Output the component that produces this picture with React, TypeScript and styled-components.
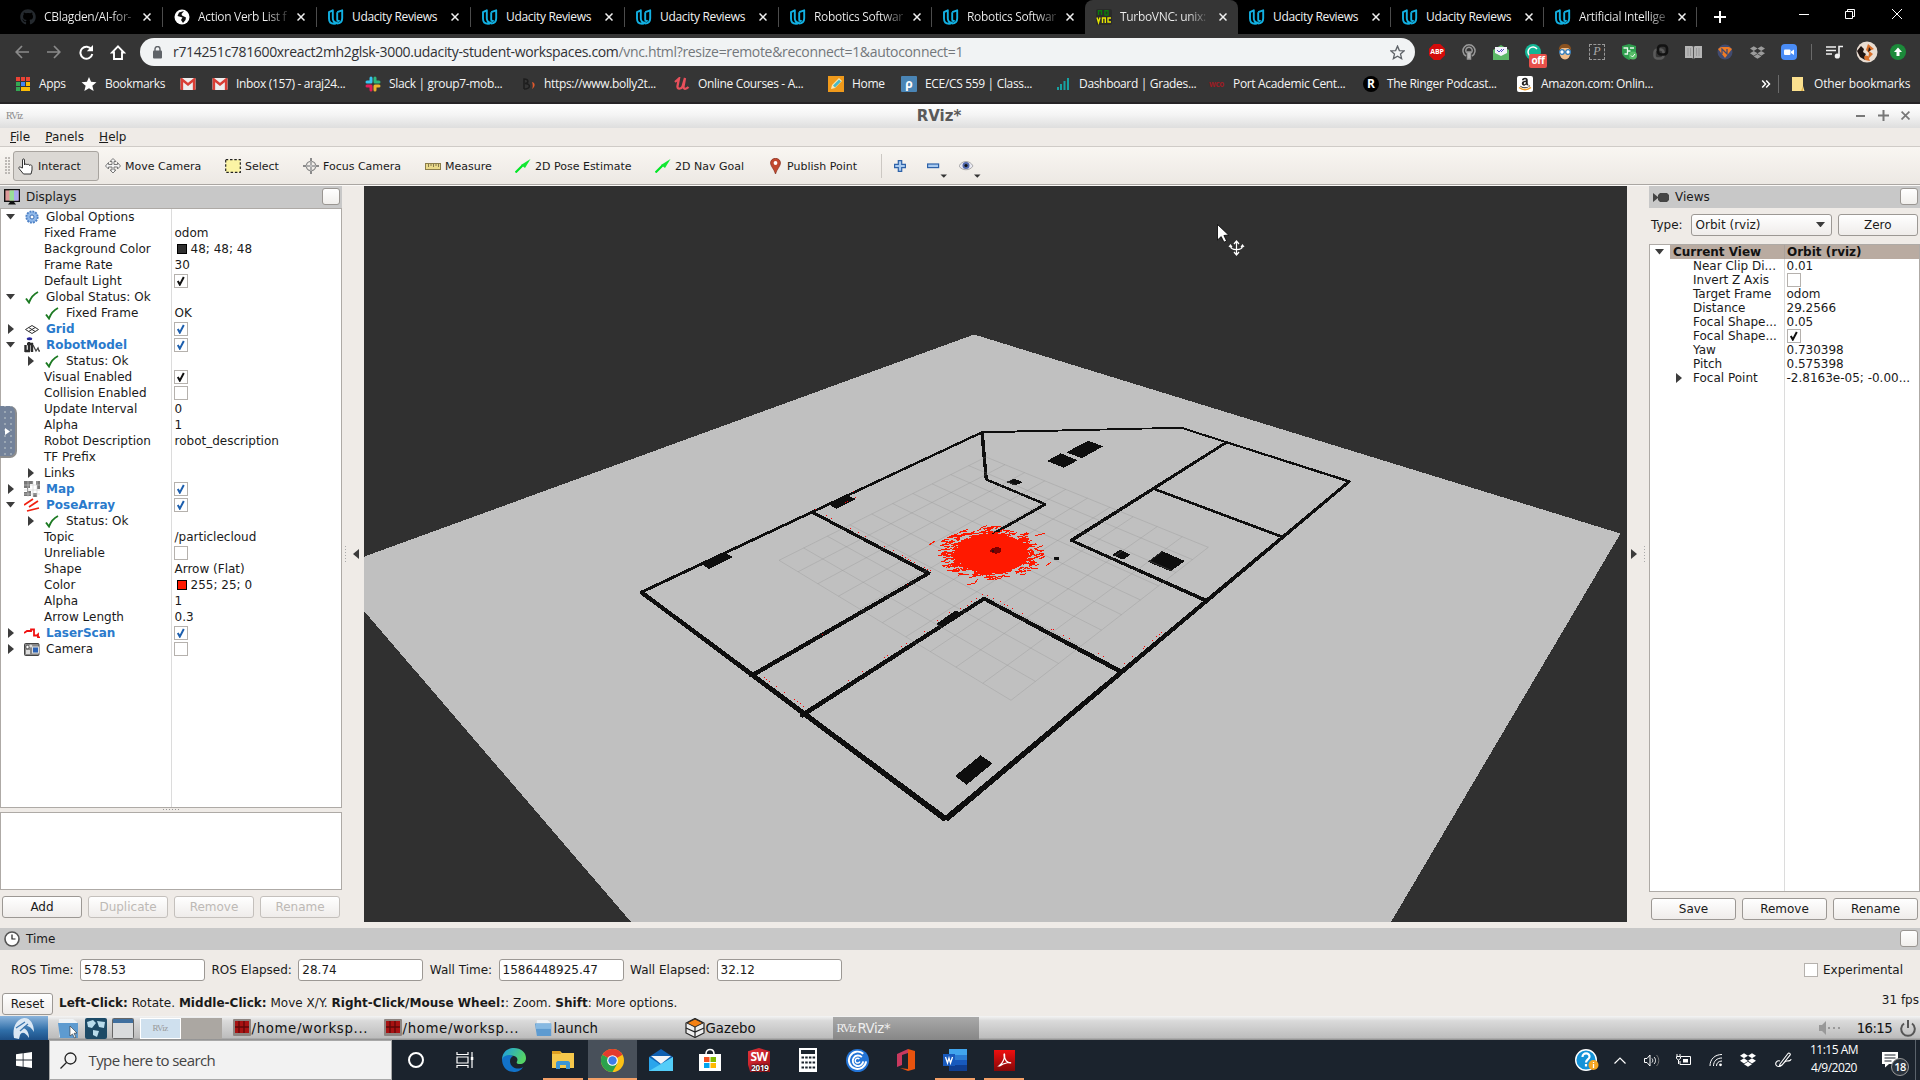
import React from "react";
import styled, { createGlobalStyle, css } from "styled-components";
import { FaDropbox, FaGithub, FaAmazon } from "react-icons/fa";

const ui = `"DejaVu Sans", "Liberation Sans", sans-serif`;
const segoe = `"Open Sans", "Noto Sans", sans-serif`;

const Global = createGlobalStyle`
  * { box-sizing: border-box; }
  html, body { margin: 0; padding: 0; background: #000; }
  body { overflow: hidden; }
  svg { display: block; flex: none; }
`;

const Screen = styled.div`
  width: 1920px;
  height: 1080px;
  display: flex;
  flex-direction: column;
  overflow: hidden;
  position: relative;
  background: #efebe7;
  font-family: ${ui};
  font-size: 12px;
  color: #1a1a1a;
  white-space: nowrap;
`;

/* ---------- browser ---------- */
const TabStrip = styled.div`
  height: 34px;
  background: #000;
  display: flex;
  padding-left: 9px;
  font-family: ${segoe};
`;
const Tab = styled.div<{ $w: number; $active?: boolean; $sep?: boolean }>`
  width: ${(p) => p.$w}px;
  height: 34px;
  flex: none;
  display: flex;
  align-items: center;
  padding: 0 0 1px 11px;
  color: #f2f2f2;
  font-size: 12px;
  letter-spacing: -0.32px;
  border-radius: 8px 8px 0 0;
  background: ${(p) => (p.$active ? "#353535" : "transparent")};
  background-image: ${(p) => (p.$sep ? "linear-gradient(#4c4c4c,#4c4c4c)" : "none")};
  background-size: 1px 20px;
  background-position: right 7px;
  background-repeat: no-repeat;
`;
const TabTitle = styled.span<{ $fade?: boolean }>`
  width: 92px;
  margin-left: 8px;
  ${(p) =>
    p.$fade &&
    css`
      color: transparent;
      background: linear-gradient(90deg, #f2f2f2 74%, #2a2a2a 98%);
      background-clip: text;
      -webkit-background-clip: text;
    `}
`;
const TabClose = styled.span`
  margin-left: 7px;
  display: flex;
`;
const NewTab = styled.div`
  width: 46px;
  display: flex;
  align-items: center;
  justify-content: center;
`;
const WinButtons = styled.div`
  margin-left: auto;
  height: 28px;
  width: 139px;
  display: flex;
  align-items: center;
  & > svg { margin: 0 auto; }
`;
const AddressRow = styled.div`
  height: 34px;
  background: #353535;
  display: flex;
  align-items: center;
  padding: 2px 6px 0 6px;
`;
const Slot = styled.div<{ $w: number }>`
  width: ${(p) => p.$w}px;
  height: 100%;
  flex: none;
  display: flex;
  align-items: center;
  justify-content: center;
  position: relative;
`;
const Omnibox = styled.div`
  width: 1275px;
  height: 28px;
  margin-left: 6px;
  border-radius: 14px;
  background: #f1f3f4;
  display: flex;
  align-items: center;
  padding: 0 10px 0 12px;
  font-family: ${segoe};
  font-size: 14px;
  letter-spacing: -0.33px;
  color: #303134;
`;
const Url = styled.span`
  margin: 0 0 1px 10px;
  flex: 1;
`;
const UrlPath = styled.span`
  color: #73777b;
`;
const OffBadge = styled.span`
  position: absolute;
  left: 12px;
  top: 18px;
  width: 18px;
  height: 14px;
  border-radius: 2px;
  background: #e8504a;
  color: #fff;
  font: bold 10px/13px ${segoe};
  letter-spacing: -0.3px;
  text-align: center;
`;
const Extensions = styled.div`
  display: flex;
  height: 100%;
  margin-left: 6px;
`;
const AbpOctagon = styled.div`
  width: 16px;
  height: 16px;
  background: #d40b0b;
  clip-path: polygon(30% 0, 70% 0, 100% 30%, 100% 70%, 70% 100%, 30% 100%, 0 70%, 0 30%);
  color: #fff;
  font: bold 7px/16px ${segoe};
  letter-spacing: -0.2px;
  text-align: center;
`;
const DashedP = styled.div`
  width: 16px;
  height: 16px;
  border: 1px dashed #999;
  color: #aaa;
  font: italic 12px/13px "Liberation Serif", serif;
  text-align: center;
`;
const BookmarkBar = styled.div`
  height: 36px;
  background: #353535;
  border-bottom: 2px solid #262426;
  display: flex;
  align-items: center;
  padding-left: 15px;
  padding-bottom: 3px;
  font-family: ${segoe};
  font-size: 12px;
  letter-spacing: -0.3px;
  color: #f4f4f4;
`;
const Bookmark = styled.div<{ $w: number; $ls?: number }>`
  width: ${(p) => p.$w}px;
  flex: none;
  display: flex;
  align-items: center;
  gap: 8px;
  letter-spacing: ${(p) => p.$ls ?? -0.33}px;
  & > svg { min-width: 16px; }
`;
const BarDivider = styled.div`
  width: 1px;
  height: 18px;
  margin: 0 11px 0 2px;
  background: #6a6a6a;
`;
const LetterTile = styled.span<{ $bg: string; $fg: string; $round?: boolean }>`
  width: 16px;
  height: 16px;
  border-radius: ${(p) => (p.$round ? 8 : 1)}px;
  background: ${(p) => p.$bg};
  color: ${(p) => p.$fg};
  font: bold 12px/15px ${segoe};
  text-align: center;
  letter-spacing: 0;
  flex: none;
`;
const TinyMark = styled.span<{ $c: string }>`
  width: 16px;
  color: ${(p) => p.$c};
  font: bold 8px/16px ${segoe};
  letter-spacing: -0.3px;
  flex: none;
`;

/* ---------- rviz window ---------- */
const WindowTitle = styled.div`
  height: 24px;
  background: linear-gradient(#fff, #f4f4f4 45%, #dedede);
  display: flex;
  align-items: center;
  padding: 0 10px 1px 6px;
  font-weight: bold;
  font-size: 15px;
  color: #5a5a5a;
`;
const TitleText = styled.span`
  flex: 1;
  text-align: center;
`;
const WindowMark = styled.span`
  width: 60px;
  font: 10px/14px "Liberation Serif", serif;
  letter-spacing: -0.8px;
  color: #8a8a8a;
`;
const WindowControls = styled.span`
  width: 54px;
  margin-left: 44px;
  display: flex;
  align-items: center;
  justify-content: space-between;
  color: #666;
`;
const MenuBar = styled.div`
  height: 19px;
  border-bottom: 1px solid #cfcbc7;
  display: flex;
  gap: 15.2px;
  padding: 1px 0 0 10px;
  line-height: 16px;
`;
const ToolBar = styled.div`
  height: 39px;
  background: linear-gradient(#f9f6f2, #ece8e3);
  border-bottom: 1px solid #fbf9f7;
  box-shadow: inset 0 -1px 0 #aaa6a2;
  display: flex;
  align-items: center;
  padding: 0 0 0 5px;
  font-size: 11px;
`;
const Handle = styled.div`
  width: 5px;
  height: 18px;
  margin-right: 3px;
  background: radial-gradient(circle at 1px 1px, #bdb9b5 0.8px, transparent 1px) 0 0 / 3px 3px;
`;
const Tool = styled.div<{ $w: number; $pressed?: boolean }>`
  width: ${(p) => p.$w}px;
  height: 30px;
  flex: none;
  display: flex;
  align-items: center;
  gap: 4px;
  ${(p) =>
    p.$pressed &&
    css`
      width: 86px;
      margin-right: 6px;
      padding-left: 4px;
      border: 1px solid #a8a49f;
      border-radius: 3px;
      background: #dbd8d4;
    `}
`;
const ToolText = styled.span`
  padding-top: 1px;
`;
const ToolDivider = styled.div`
  width: 1px;
  height: 24px;
  background: #ccc8c3;
  margin-right: 12px;
`;
const Body = styled.div`
  height: 742px;
  display: flex;
`;
const LeftDock = styled.div`
  width: 342px;
  display: flex;
  flex-direction: column;
`;
const RightDock = styled.div`
  width: 271px;
  display: flex;
  flex-direction: column;
`;
const Splitter = styled.div<{ $right?: boolean }>`
  width: 22px;
  height: 736px;
  display: flex;
  align-items: center;
  justify-content: flex-end;
  padding-right: ${(p) => (p.$right ? 4 : 5)}px;
  gap: 7px;
`;
const SplitDots = styled.div`
  width: 1px;
  height: 17px;
  background: repeating-linear-gradient(#aaa 0 1px, transparent 1px 3px);
`;
const HDots = styled.div`
  width: 17px;
  height: 1px;
  margin: 1px auto 2px;
  background: repeating-linear-gradient(90deg, #999 0 1px, transparent 1px 3px);
`;
const DockHeader = styled.div`
  height: 22px;
  flex: none;
  background: #c8c8c8;
  display: flex;
  align-items: center;
  padding: 0 2px 0 4px;
  gap: 6px;
`;
const DockClose = styled.span`
  margin-left: auto;
  width: 18px;
  height: 17px;
  margin-bottom: 1px;
  border: 1px solid #9a9692;
  border-radius: 3px;
  background: linear-gradient(#fff, #f1efec);
`;
const Tree = styled.div<{ $h: number; $split: number }>`
  height: ${(p) => p.$h}px;
  border: 1px solid #aeaaa6;
  background: linear-gradient(#dcdcdc, #dcdcdc) ${(p) => p.$split}px 0 / 1px 100% no-repeat #fff;
`;
const Row = styled.div<{ $h: number; $split: number }>`
  height: ${(p) => p.$h}px;
  display: grid;
  grid-template-columns: ${(p) => p.$split}px 1fr;
  line-height: ${(p) => p.$h}px;
`;
const NameCell = styled.div<{ $pad: number; $link?: boolean; $sel?: boolean }>`
  padding-left: ${(p) => p.$pad}px;
  display: flex;
  align-items: center;
  ${(p) => p.$link && css`color: #2a7acc; font-weight: bold;`}
  ${(p) => p.$sel && css`background: linear-gradient(90deg, #fff 20px, #b9aba1 20px); font-weight: bold; color: #111;`}
`;
const Twisty = styled.span`
  width: 10px;
  display: flex;
  justify-content: center;
  flex: none;
`;
const IconBox = styled.span<{ $ml: number; $w: number; $mr: number }>`
  margin-left: ${(p) => p.$ml}px;
  width: ${(p) => p.$w}px;
  margin-right: ${(p) => p.$mr}px;
  height: 16px;
  flex: none;
  display: flex;
  align-items: center;
  justify-content: center;
`;
const NameText = styled.span<{ $ml?: number }>`
  margin-left: ${(p) => p.$ml ?? 0}px;
`;
const ValueCell = styled.div<{ $sel?: boolean; $pad?: number }>`
  display: flex;
  align-items: center;
  padding-left: ${(p) => p.$pad ?? 2.5}px;
  ${(p) => p.$sel && css`background: #b9aba1; font-weight: bold; color: #111; border-left: 1px solid #aaa19a; padding-left: 2px;`}
`;
const Check = styled.span`
  width: 14px;
  height: 14px;
  border: 1px solid #b5b1ad;
  background: #fff;
  display: flex;
  align-items: center;
  justify-content: center;
  flex: none;
`;
const Swatch = styled.span<{ $c: string }>`
  width: 10px;
  height: 10px;
  margin: 0 4px 0 3px;
  border: 1px solid #000;
  background: ${(p) => p.$c};
`;
const HelpBox = styled.div`
  height: 78px;
  border: 1px solid #aeaaa6;
  background: #fff;
`;
const Buttons = styled.div`
  display: flex;
  gap: 6px;
  padding: 6px 2px 0;
`;
const Button = styled.div<{ $disabled?: boolean; $w?: number }>`
  ${(p) => (p.$w ? `width: ${p.$w}px; flex: none;` : "flex: 1;")}
  height: 22px;
  border: 1px solid ${(p) => (p.$disabled ? "#c4c0bc" : "#9c9894")};
  border-radius: 3px;
  background: linear-gradient(#fff, #efecea);
  color: ${(p) => (p.$disabled ? "#bdb9b5" : "#1a1a1a")};
  text-align: center;
  line-height: 20px;
`;
const TypeRow = styled.div`
  height: 36px;
  display: flex;
  align-items: center;
  padding: 0 2px 3px 2px;
`;
const Combo = styled.div`
  width: 141px;
  height: 22px;
  margin: 0 6px 0 8px;
  padding: 0 6px 0 4px;
  border: 1px solid #9c9894;
  border-radius: 3px;
  background: linear-gradient(#fff, #efecea);
  display: flex;
  align-items: center;
  justify-content: space-between;
`;
const TimeRow = styled.div`
  height: 39px;
  display: flex;
  align-items: center;
  padding: 0 17px 0 11px;
`;
const Field = styled.span`
  width: 125px;
  height: 22px;
  margin: 0 6.5px 0 6.4px;
  padding-left: 3px;
  border: 1px solid #9c9894;
  border-radius: 3px;
  background: #fff;
  line-height: 20px;
`;
const Experimental = styled.span`
  margin-left: auto;
  display: flex;
  align-items: center;
  gap: 5px;
`;
const StatusRow = styled.div`
  height: 27px;
  display: flex;
  align-items: center;
  padding: 2px 1px 0 2px;
`;
const Hint = styled.span`
  margin-left: 6px;
  margin-bottom: 2px;
  flex: 1;
  letter-spacing: 0.025px;
`;
const Fps = styled.span`
  margin-bottom: 7px;
`;

/* ---------- lxde panel ---------- */
const Panel = styled.div`
  height: 24px;
  background: linear-gradient(#f4f4f4, #dadada 20%, #bdbdbd 90%, #8a8a8a);
  display: flex;
  align-items: center;
  font-size: 13.3px;
  color: #111;
`;
const LxLogo = styled.div`
  width: 48px;
  height: 24px;
  background: linear-gradient(#8bb4dc, #2f6ea8 60%, #1d4f86);
  display: flex;
  justify-content: center;
  margin-right: 9px;
`;
const Launch = styled.div`
  width: 27.5px;
`;
const Desk = styled.div<{ $on?: boolean }>`
  width: 41px;
  height: 21px;
  background: ${(p) => (p.$on ? "#cfe0ee" : "#aba7a2")};
  border: ${(p) => (p.$on ? "1px solid #fff" : "0")};
  font: 9px/18px "Liberation Serif", serif;
  letter-spacing: -0.7px;
  color: #999;
  text-align: center;
`;
const Task = styled.div<{ $w: number; $active?: boolean; $ls?: number }>`
  width: ${(p) => p.$w}px;
  height: 23px;
  display: flex;
  align-items: center;
  gap: 1px;
  padding-left: 11px;
  letter-spacing: ${(p) => p.$ls ?? 0}px;
  ${(p) => p.$active && css`background: linear-gradient(#a9a9a9, #868686); color: #eee; padding-left: 4px;`}
`;
const TaskMark = styled.span`
  font: 12px/20px "Liberation Serif", serif;
  letter-spacing: -1.2px;
  width: 20px;
`;
const PanelRight = styled.div`
  margin-left: auto;
  display: flex;
  align-items: center;
  padding-right: 4px;
  gap: 8px;
`;
const PanelClock = styled.span`
  margin-left: 8px;
  letter-spacing: -0.6px;
`;

/* ---------- windows taskbar ---------- */
const Taskbar = styled.div`
  height: 40px;
  background: #1b232d;
  display: flex;
  font-family: ${segoe};
`;
const SearchBox = styled.div`
  width: 343px;
  height: 40px;
  background: #f2f2f2;
  border: 1px solid #a8a8a8;
  display: flex;
  align-items: center;
  padding-left: 10px;
  gap: 12px;
  font-size: 15px;
  letter-spacing: -0.6px;
  color: #444;
`;
const AppSlot = styled.div<{ $run?: boolean; $on?: boolean }>`
  width: 49px;
  height: 40px;
  display: flex;
  align-items: center;
  justify-content: center;
  ${(p) => p.$on && css`background: #48505a;`}
  ${(p) => p.$run && css`
    background-image: linear-gradient(#f4a067, #f4a067);
    background-size: ${p.$on ? "49px" : "40px"} 2px;
    background-position: center bottom;
    background-repeat: no-repeat;
  `}
`;
const SwTile = styled.div`
  width: 22px;
  height: 24px;
  clip-path: polygon(50% 0, 100% 14%, 100% 100%, 10% 100%, 0 70%, 0 14%);
  background: linear-gradient(135deg, #e8333a, #9b0f18);
  color: #fff;
  font: bold 12px/15px ${segoe};
  letter-spacing: -0.5px;
  text-align: center;
  padding-top: 1px;
`;
const SwYear = styled.div`
  font: bold 8px/7px ${segoe};
  letter-spacing: -0.2px;
  padding-left: 2px;
  text-shadow: 0 0 2px #000, 0 0 2px #000;
`;
const Tray = styled.div`
  margin-left: auto;
  width: 350px;
  display: flex;
`;
const Clock = styled.div`
  width: 68px;
  margin-left: -2px;
  margin-right: 2px;
  text-align: center;
  font-size: 12px;
  line-height: 18px;
  letter-spacing: -0.5px;
  color: #fff;
  padding-top: 1px;
`;
const Count = styled.span`
  position: absolute;
  left: 21px;
  top: 18px;
  width: 18px;
  height: 18px;
  border-radius: 9px;
  border: 1px solid #999;
  background: #2b333d;
  color: #fff;
  font: 600 11px/16px ${segoe};
  letter-spacing: -0.5px;
  text-align: center;
`;
const ShowDesktop = styled.div`
  width: 5px;
  margin-left: auto;
  border-left: 1px solid #5a626b;
`;

const VncHandle = styled.div`
  position: absolute;
  left: 0;
  top: 406px;
  width: 17px;
  height: 52px;
  border-radius: 0 7px 7px 0;
  background: radial-gradient(circle, #9aa6b3 0.8px, transparent 1px) 2px 3px / 6px 6px #73829a;
  border-right: 2px solid #8d8d8d;
  border-bottom: 2px solid #8d8d8d;
  display: flex;
  align-items: center;
  justify-content: center;
`;
const Pointer = styled.div`
  position: absolute;
  left: 1216px;
  top: 223px;
`;

/* ---------- icons ---------- */
const Udacity = () => (
  <svg width="16" height="16" viewBox="0 0 16 16" fill="none" stroke="#12b0e2" strokeWidth="1.9" strokeLinejoin="round">
    <path d="M4.8 1.3L1 3.2v6.3C1 13 3 14.8 6 14.8c1.3 0 2.2-.3 3-1C6.5 13.6 4.8 12 4.8 9.3z" />
    <path d="M9.200 3.200l5-1.900v8c0 3.200-2.200 5.200-5.200 5.300" /><path d="M9.200 3.200v7.600c0 1.500 1.600 1.500 2.400.4" />
  </svg>
);
const X = ({ c = "#f0f0f0", s = 8 }: { c?: string; s?: number }) => (
  <svg width={s} height={s} viewBox="0 0 8 8" stroke={c} strokeWidth="1.5"><path d="M.5.5l7 7M7.5.5l-7 7" /></svg>
);
const Gmail = () => (
  <svg width="15" height="12" viewBox="0 0 15 12"><rect width="15" height="12" rx="1" fill="#eee" /><path d="M1.4 12V1.5l6.1 5 6.1-5V12" fill="none" stroke="#d93e35" strokeWidth="2.5" /></svg>
);
const Slack = () => (
  <svg width="16" height="16" viewBox="0 0 16 16" strokeWidth="3" strokeLinecap="round"><path d="M6 2v4M2 6h4" stroke="#36c5f0" /><path d="M10 2v4M14 6h-4" stroke="#2eb67d" /><path d="M10 14v-4M14 10h-4" stroke="#ecb22e" /><path d="M6 14v-4M2 10h4" stroke="#e01e5a" /></svg>
);
const Globe = () => (
  <svg width="16" height="16" viewBox="0 0 16 16"><circle cx="8" cy="8" r="7.5" fill="#fff" /><path d="M10 2L5 3.5 3.5 7l5 1.5L7 11l2 3 2.5-3L12 8.500 8 6.500 7.500 5z" fill="#111" /></svg>
);
const Tick = ({ c }: { c: string }) => (
  <svg width="10" height="10" viewBox="0 0 10 10"><path d="M1.8 5l2 3.600L7.800 1" fill="none" stroke={c} strokeWidth="2" /></svg>
);
const GreenTick = () => (
  <svg width="14" height="13" viewBox="0 0 14 13"><path d="M1 7.500l3 4C5.500 7.500 9 3 13 1" fill="none" stroke="#1c7a22" strokeWidth="1.900" /></svg>
);
const Down = ({ w = 9 }: { w?: number }) => (
  <svg width={w} height={w * 0.6} viewBox="0 0 10 6"><path d="M0 0h10L5 6z" fill="#3c3c3c" /></svg>
);
const Right = ({ flip }: { flip?: boolean }) => (
  <svg width="6" height="10" viewBox="0 0 6 10"><path d={flip ? "M6 0v10L0 5z" : "M0 0v10l6-5z"} fill="#3c3c3c" /></svg>
);
const Arrow2D = () => (
  <svg width="16" height="14" viewBox="0 0 16 14"><path d="M.5 13.500L8 6" stroke="#00e626" strokeWidth="2.200" /><path d="M6 6l9.500-6-5.500 9z" fill="#12e832" /></svg>
);

const icons: Record<string, React.ReactNode> = {
  gear: <svg width="14" height="14" viewBox="0 0 14 14"><circle cx="7" cy="7" r="5.600" fill="#86b0e4" stroke="#4d80c5" strokeWidth="2" strokeDasharray="1.900 1" /><circle cx="7" cy="7" r="4.600" fill="#8fb8ea" /><circle cx="7" cy="7" r="2" fill="#fff" stroke="#3d6fb5" /></svg>,
  tick: <GreenTick />,
  grid: <svg width="14" height="9" viewBox="0 0 14 9" fill="none" stroke="#333" strokeWidth="1"><path d="M.5 4.500L7 .5l6.500 4L7 8.500zM3.700 2.500l6.500 4M10.200 2.500l-6.500 4" /></svg>,
  robot: <svg width="16" height="16" viewBox="0 0 16 16"><ellipse cx="5.500" cy="1.800" rx="2.800" ry="1.500" fill="#25259a" /><path d="M1.500 8v7M5 5v9M8 6v9M3 7h6M1 14h5" stroke="#2b2b2b" strokeWidth="2.400" fill="none" /><path d="M9 8l3 6 2-3 1 3h1" stroke="#444" strokeWidth="1.300" fill="none" /></svg>,
  map: <svg width="16" height="16" viewBox="0 0 16 16"><path d="M0 0h9v3H6v4H4v3h3v5H0v-4h3V7H0zM12 0h4v8h-3V4h-1zM9 12h4v4H9z" fill="#777" /><path d="M4 0v16M9 0v16M13 0v16M0 4h16M0 9h16M0 13h16" stroke="#ccc" strokeWidth=".6" /></svg>,
  pose: <svg width="16" height="14" viewBox="0 0 16 14" stroke="#f02010" strokeWidth="1.700"><path d="M0 7l9-6M5 9l9-6M3 13l12-3" /></svg>,
  laser: <svg width="16" height="10" viewBox="0 0 16 10"><path d="M0 5l3-2h4V1.500h3v6h3l1-1v3h2" fill="none" stroke="#f01010" strokeWidth="1.800" /></svg>,
  camera: <svg width="16" height="14" viewBox="0 0 16 14"><rect x=".5" y="1.500" width="14.500" height="12" rx="1" fill="#888" stroke="#444" /><circle cx="3.500" cy="5" r="1.700" fill="#fff" stroke="#222" strokeWidth=".6" /><circle cx="6.800" cy="4" r="1.500" fill="#ddd" /><rect x="8.500" y="5" width="6" height="6" fill="#2b62b5" stroke="#ddd" /><rect x="2" y="8" width="4" height="4" fill="#ddd" /></svg>,
};

function VncIcon() {
  return (
    <svg width="16" height="16" viewBox="0 0 16 16"><rect width="16" height="16" rx="2" fill="#2a2a2a" /><g fill="none" strokeWidth="1.400"><path d="M2.500 6V1.700h3V6M9 1.700h3V6H9z" stroke="#0c7a0c" /><path d="M1 8.500l1.500 5 1.500-5M6.500 14V9h2.800v5M15 9h-3v4h3" stroke="#e6e600" /></g></svg>
  );
}

/* ---------- data ---------- */
const tabs: { icon: React.ReactNode; t: string; fade?: boolean; nosep?: boolean; active?: boolean }[] = [
  { icon: <FaGithub size={16} color="#24292e" />, t: "CBlagden/AI-for-", fade: true },
  { icon: <Globe />, t: "Action Verb List f", fade: true },
  { icon: <Udacity />, t: "Udacity Reviews" },
  { icon: <Udacity />, t: "Udacity Reviews" },
  { icon: <Udacity />, t: "Udacity Reviews" },
  { icon: <Udacity />, t: "Robotics Softwar", fade: true },
  { icon: <Udacity />, t: "Robotics Softwar", fade: true, nosep: true },
  { icon: <VncIcon />, t: "TurboVNC: unix:", fade: true, active: true, nosep: true },
  { icon: <Udacity />, t: "Udacity Reviews" },
  { icon: <Udacity />, t: "Udacity Reviews" },
  { icon: <Udacity />, t: "Artificial Intellige", fade: true },
];

type Item = { n: string; d?: number; open?: boolean | null; icon?: string; v?: string; c?: boolean; link?: boolean; sw?: string };
const items: Item[] = [
  { n: "Global Options", open: true, icon: "gear" },
  { n: "Fixed Frame", d: 1, v: "odom" },
  { n: "Background Color", d: 1, v: "48; 48; 48", sw: "#303030" },
  { n: "Frame Rate", d: 1, v: "30" },
  { n: "Default Light", d: 1, c: true },
  { n: "Global Status: Ok", open: true, icon: "tick" },
  { n: "Fixed Frame", d: 1, icon: "tick", v: "OK" },
  { n: "Grid", open: false, icon: "grid", c: true, link: true },
  { n: "RobotModel", open: true, icon: "robot", c: true, link: true },
  { n: "Status: Ok", d: 1, open: false, icon: "tick" },
  { n: "Visual Enabled", d: 1, c: true },
  { n: "Collision Enabled", d: 1, c: false },
  { n: "Update Interval", d: 1, v: "0" },
  { n: "Alpha", d: 1, v: "1" },
  { n: "Robot Description", d: 1, v: "robot_description" },
  { n: "TF Prefix", d: 1 },
  { n: "Links", d: 1, open: false },
  { n: "Map", open: false, icon: "map", c: true, link: true },
  { n: "PoseArray", open: true, icon: "pose", c: true, link: true },
  { n: "Status: Ok", d: 1, open: false, icon: "tick" },
  { n: "Topic", d: 1, v: "/particlecloud" },
  { n: "Unreliable", d: 1, c: false },
  { n: "Shape", d: 1, v: "Arrow (Flat)" },
  { n: "Color", d: 1, v: "255; 25; 0", sw: "#ff1900" },
  { n: "Alpha", d: 1, v: "1" },
  { n: "Arrow Length", d: 1, v: "0.3" },
  { n: "LaserScan", open: false, icon: "laser", c: true, link: true },
  { n: "Camera", open: false, icon: "camera", c: false },
];
const views: Item[] = [
  { n: "Near Clip Di...", v: "0.01" },
  { n: "Invert Z Axis", c: false },
  { n: "Target Frame", v: "odom" },
  { n: "Distance", v: "29.2566" },
  { n: "Focal Shape...", v: "0.05" },
  { n: "Focal Shape...", c: true },
  { n: "Yaw", v: "0.730398" },
  { n: "Pitch", v: "0.575398" },
  { n: "Focal Point", v: "-2.8163e-05; -0.00...", open: false },
];

function DisplayRow({ it }: { it: Item }) {
  const d = it.d ?? 0;
  return (
    <Row $h={16} $split={171}>
      <NameCell $pad={4.5 + d * 20} $link={it.link}>
        <Twisty>{it.open === true ? <Down /> : it.open === false ? <Right /> : null}</Twisty>
        {it.icon ? <IconBox $ml={d ? 8.5 : 8.5} $w={16} $mr={d ? 6 : 6}>{icons[it.icon]}</IconBox> : null}
        <NameText $ml={it.icon ? 0 : 8.5}>{it.n}</NameText>
      </NameCell>
      <ValueCell $pad={it.v && !it.sw ? 2.5 : 1.5}>
        {it.c !== undefined && <Check>{it.c && <Tick c={it.link ? "#1d5fae" : "#111"} />}</Check>}
        {it.sw && <Swatch $c={it.sw} />}
        {it.v}
      </ValueCell>
    </Row>
  );
}

/* ---------- 3D scene ---------- */
type P = [number, number];
const gridQuad: P[] = [[779, 560.3], [1011, 700.3], [1208.3, 547.3], [986, 457]];
function project(u: number, v: number): P {
  const [[x0, y0], [x1, y1], [x2, y2], [x3, y3]] = gridQuad;
  const ax = x1 - x2, bx = x3 - x2, sx = x0 - x1 + x2 - x3;
  const ay = y1 - y2, by = y3 - y2, sy = y0 - y1 + y2 - y3;
  const det = ax * by - bx * ay;
  const g = (sx * by - bx * sy) / det;
  const h = (ax * sy - sx * ay) / det;
  const w = g * u + h * v + 1;
  return [((x1 - x0 + g * x1) * u + (x3 - x0 + h * x3) * v + x0) / w, ((y1 - y0 + g * y1) * u + (y3 - y0 + h * y3) * v + y0) / w];
}
const gridPath = Array.from({ length: 11 }, (_, i) => {
  const t = i / 10;
  return `M${project(t, 0)}L${project(t, 1)}M${project(0, t)}L${project(1, t)}`;
}).join("");

const walls: [number, number, number, number, number, number][] = [
  [982, 432.3, 2, 1182, 427.7, 1.7],
  [1181, 427.7, 1.9, 1350, 481.7, 2.5],
  [1350, 480.8, 3, 946, 819, 6],
  [946, 819.500, 6, 641, 592, 4.200],
  [640.5, 592.6, 3, 982, 432.3, 2.3],
  [982, 432, 3.6, 986.3, 480, 3.2],
  [985, 479, 2.4, 1046, 504.5, 2.5],
  [1046, 503.8, 2.8, 992, 534.5, 2.8],
  [1227, 442, 2.7, 1070.5, 541, 3.6],
  [1153, 488.5, 2.5, 1283, 537.2, 2.7],
  [1070.5, 540, 2.9, 1207, 601, 3.6],
  [811.5, 511.8, 3, 930, 574, 3.9],
  [929.5, 572.7, 3.7, 751, 676, 4.4],
  [985, 598, 3.8, 801, 716, 4.8],
  [983, 598, 3.7, 1123, 672.8, 4.7],
];
const wallPoly = ([x1, y1, a, x2, y2, b]: number[]) => {
  const l = Math.hypot(x2 - x1, y2 - y1);
  const nx = -(y2 - y1) / l / 2, ny = (x2 - x1) / l / 2;
  return `${x1 + nx * a},${y1 + ny * a} ${x2 + nx * b},${y2 + ny * b} ${x2 - nx * b},${y2 - ny * b} ${x1 - nx * a},${y1 - ny * a}`;
};
const boxes = [
  "828.3,504.3 847.7,495.3 855.7,499 836.7,508.7",
  "701.7,564.3 725,552.7 733,557 709.3,569",
  "936,624 955,611 964,612.3 940,626.7",
  "955,776 980.7,755.3 992.7,763.3 966.7,784.7",
  "1047,461 1060.7,453.3 1077.7,460.3 1063.7,467.7",
  "1066.3,452.3 1088.3,440.7 1103,446.3 1081.7,458.3",
  "1006.3,482 1014,478.7 1022.7,482 1015,485.7",
  "1112,555 1120,549.7 1130.7,554.7 1123,559.7",
  "1147.7,561.7 1162,551 1184.7,561 1170.7,571.3",
];
const particles = (() => {
  let seed = 77;
  const rnd = () => ((seed = (seed * 16807) % 2147483647) / 2147483647);
  let d = "";
  for (let i = 0; i < 760; i++) {
    const a = rnd() * Math.PI * 2;
    const r = 0.74 + Math.pow(rnd(), 2.6) * 0.5;
    const x = 990.5 + Math.cos(a) * r * 43;
    const y = 554 + Math.sin(a) * r * 21;
    const b = -0.6 + rnd() * 0.65;
    const l = 3 + rnd() * 5;
    d += `M${(x - l / 2).toFixed(1)} ${y.toFixed(1)}l${(Math.cos(b) * l).toFixed(1)} ${(Math.sin(b) * l * 0.8).toFixed(1)}`;
  }
  return d;
})();
const hits: P[] = [
  [826, 515], [831, 518], [850, 528], [858, 532], [865, 536], [884, 546], [893, 550], [902, 555], [905, 557], [908, 559], [910, 560], [914, 562], [924, 567], [927, 569], [930, 570],
  [845, 502], [847, 501], [855, 497], [853, 491], [815, 509], [907, 584], [822, 634], [764, 677], [766, 679], [769, 681], [776, 686], [784, 692], [794, 699], [797, 701], [800, 703], [803, 706],
  [848, 680], [862, 671], [884, 657], [887, 655], [901, 646], [906, 643], [924, 631], [937, 620], [949, 612], [960, 608], [967, 605], [971, 601], [976, 598], [982, 594], [987, 595], [993, 598],
  [1000, 601], [1004, 604], [1007, 605], [1012, 608], [1022, 613], [1051, 629], [1053, 629], [1063, 635], [1069, 638], [1098, 653], [1103, 656], [1124, 663], [1132, 656], [1143, 648], [1144, 646], [1152, 640], [1156, 636], [1159, 634], [1161, 632],
];
function Scene() {
  return (
    <svg width="1263" height="736" viewBox="364 186 1263 736" shapeRendering="crispEdges">
      <rect x="364" y="186" width="1263" height="736" fill="#303030" />
      <polygon points="364,556.7 974,334.5 1620.5,533.5 1391,922 631,922 364,611" fill="#c0c0c0" />
      <g fill="#0e0e0e">
        {walls.map((w, i) => <polygon key={i} points={wallPoly(w)} />)}
        {boxes.map((b) => <polygon key={b} points={b} />)}
        <rect x="749" y="673" width="7" height="4" />
        <rect x="800" y="713" width="6" height="4" />
        <rect x="1053.5" y="557" width="5" height="3" />
      </g>
      <path d={gridPath} stroke="#909090" strokeOpacity=".3" fill="none" shapeRendering="auto" />
      <ellipse cx="992" cy="553.5" rx="36" ry="19.5" fill="#ff1900" />
      <path d={particles} stroke="#ff1900" strokeWidth="1" fill="none" />
      <path d="M935 541l-6 4M1035 536l10-3M1046 566l5-4M967 585l8-2 3-4M991 527l10-1M948 541l-5 1M948 549l-6 1" stroke="#ff1900" fill="none" />
      <path d="M992 534l14-7" stroke="#0e0e0e" strokeDasharray="3 1" />
      <path d="M991 549l5-2 5 1v4l-5 2-6-2z" fill="#7c0000" />
      <rect x="992" y="550" width="2" height="2" fill="#301010" />
      {hits.map(([x, y], i) => <rect key={i} x={x} y={y} width="1" height="1" fill="#f00" />)}
    </svg>
  );
}

const barIcons: [number, React.ReactNode][] = [
  [32, <AbpOctagon>ABP</AbpOctagon>],
  [32, <svg width="14" height="16" viewBox="0 0 14 16" fill="none" stroke="#999" strokeWidth="1.500"><path d="M4 12a6 6 0 1 1 6 0" /><path d="M5 9a3.200 3.200 0 1 1 4 0" /><path d="M5.500 15V8h3v7z" fill="#bbb" /></svg>],
  [32, <svg width="16" height="15" viewBox="0 0 16 15"><path d="M0 5l8-5 8 5v10H0z" fill="#5cb867" /><path d="M2 2h12v6l-6 3-6-3z" fill="#f3f3fb" /><path d="M4 5l2 2 3-3M8 7l3-3" stroke="#5a4bc0" fill="none" /></svg>],
  [32, <><svg width="16" height="16" viewBox="0 0 16 16"><circle cx="8" cy="8" r="8" fill="#13b795" /><path d="M12 5a5 5 0 1 0 0 6" fill="none" stroke="#fff" strokeWidth="1.500" /></svg><OffBadge>off</OffBadge></>],
  [32, <svg width="14" height="16" viewBox="0 0 14 16"><ellipse cx="7" cy="8.500" rx="5.500" ry="7" fill="#efbd8b" /><path d="M.8 6C1 1 4 0 7 0s6 1 6.200 6L10 4H4z" fill="#8a5220" /><circle cx="4" cy="8" r="2.300" fill="#fff" stroke="#2b7bbd" strokeWidth="1.300" /><circle cx="10" cy="8" r="2.300" fill="#fff" stroke="#2b7bbd" strokeWidth="1.300" /></svg>],
  [32, <DashedP>P</DashedP>],
  [32, <svg width="16" height="16" viewBox="0 0 16 16"><path d="M1 2l7-2 7 2v6c0 4-3 6-7 8-4-2-7-4-7-8z" fill="#2e9e4d" /><path d="M2.500 4h4v6h-3M9 4h4M6.500 7h3" stroke="#e9f7ec" fill="none" strokeWidth="1.300" /><circle cx="12" cy="11.500" r="4" fill="#58bd68" /><path d="M10 11.500l1.500 1.500 2.500-3" stroke="#fff" fill="none" /></svg>],
  [32, <svg width="16" height="16" viewBox="0 0 16 16" fill="none" strokeWidth="2.600"><rect x="1.500" y="5.500" width="9" height="9" rx="3" stroke="#5a5a5a" /><rect x="5" y="1.500" width="9" height="9" rx="3" stroke="#121212" /></svg>],
  [32, <svg width="17" height="14" viewBox="0 0 17 14"><path d="M0 1h7l1.500 1L10 1h7v12h-7l-1.500 1L7 13H0z" fill="#b5b5b5" /><path d="M8.500 1v13" stroke="#555" /><path d="M3 3v8M5.500 3v8M11.500 3v8M14 3v8" stroke="#999" /></svg>],
  [32, <svg width="16" height="16" viewBox="0 0 16 16"><circle cx="8" cy="8" r="7.500" fill="#414b70" /><path d="M1 5l3-2h8l3 2-7 9z" fill="#f07b25" /><path d="M5 10V5l5 5V5" stroke="#414b70" fill="none" strokeWidth="1.300" /></svg>],
  [32, <FaDropbox size={15} color="#9b9b9b" />],
  [32, <svg width="16" height="16" viewBox="0 0 16 16"><rect width="16" height="16" rx="4" fill="#4a8cf5" /><rect x="3" y="5.500" width="6.500" height="5.500" rx="1" fill="#fff" /><path d="M10 7.500l3-2v5.500l-3-2z" fill="#fff" /></svg>],
  [12, <svg width="1" height="16"><rect width="1" height="16" fill="#6a6a6a" /></svg>],
  [34, <svg width="17" height="14" viewBox="0 0 17 14" stroke="#f1f1f1" strokeWidth="1.600" fill="none"><path d="M0 2h10M0 5.500h10M0 9h6M13 11V1.500h4" /><circle cx="11.300" cy="11" r="1.800" fill="#f1f1f1" /></svg>],
  [31, <svg width="22" height="22" viewBox="0 0 22 22"><circle cx="11" cy="11" r="10.500" fill="#e9ddd2" /><path d="M12 3l6 5-5 2 4 3-5 5 1-6-3-3zM7 14l5 1 2 5-5-1z" fill="#d9702b" /><path d="M1 10l4-5 3 3-1 3 3 2-2 3 1 3-5-3zM13 6l2 3-3 2z" fill="#201512" /></svg>],
  [32, <svg width="16" height="16" viewBox="0 0 16 16"><circle cx="8" cy="8" r="8" fill="#1c8a3a" /><path d="M8 3.500L12 8H9.500v4h-3V8H4z" fill="#fff" /></svg>],
];

const tools: [string, number, React.ReactNode][] = [
  ["Move Camera", 120, <svg width="16" height="16" viewBox="0 0 16 16" fill="#f5f5f5" stroke="#777"><path d="M8 .5l3 3H9v3h3.500v-2l3 3.500-3 3v-2H9v3h2l-3 3-3-3h2v-3H3.500v2l-3-3 3-3.500v2H7v-3H5z" /></svg>],
  ["Select", 78, <svg width="16" height="14" viewBox="0 0 16 14"><rect x=".7" y=".7" width="14.600" height="12.600" fill="#fbf4a4" stroke="#222" strokeWidth="1.200" strokeDasharray="2.500 1.800" /></svg>],
  ["Focus Camera", 122, <svg width="16" height="16" viewBox="0 0 16 16" fill="none" stroke="#8a8a8a" strokeWidth="1.300"><circle cx="8" cy="8" r="4.700" /><path d="M8 0v16M0 8h16" strokeWidth="2" /><path d="M8 3v10M3 8h10" stroke="#ddd" strokeWidth=".8" /></svg>],
  ["Measure", 90, <svg width="16" height="7" viewBox="0 0 16 7"><rect x=".5" y=".5" width="15" height="6" fill="#e9d98a" stroke="#8b7d4b" /><path d="M3.500 1v3M6 1v2M8.500 1v3M11 1v2M13.500 1v3" stroke="#6b6040" strokeWidth=".8" /></svg>],
  ["2D Pose Estimate", 140, <Arrow2D />],
  ["2D Nav Goal", 113, <Arrow2D />],
  ["Publish Point", 113, <svg width="15" height="16" viewBox="0 0 15 16"><path d="M7.500.3C10.500.3 12.500 2.500 12.500 5c0 3-3.500 6-5 11-1.500-5-5-8-5-11C2.500 2.500 4.500.3 7.500.3z" fill="#c2492f" stroke="#7b2516" strokeWidth=".6" /><circle cx="7.500" cy="5" r="1.900" fill="#fff" /></svg>],
];

const marks: [number, React.ReactNode, string][] = [
  [66, <svg width="14" height="14" viewBox="0 0 14 14"><path d="M0 0h4v4H0zM5 0h4v4H5zM10 0h4v4h-4z" fill="#ea4335" /><path d="M0 5h4v4H0z" fill="#34a853" /><path d="M5 5h4v4H5z" fill="#4285f4" /><path d="M10 5h4v4h-4z" fill="#fbbc05" /><path d="M0 10h4v4H0z" fill="#34a853" /><path d="M5 10h9v4H5z" fill="#fbbc05" /></svg>, "Apps"],
  [99, <svg width="14" height="14" viewBox="0 0 16 15"><path d="M8 0l2.200 5.200 5.800.5-4.400 3.700L13 15l-5-3-5 3 1.400-5.600L0 5.700l5.800-.5z" fill="#fff" /></svg>, "Bookmarks"],
  [32, <Gmail />, ""],
  [153, <Gmail />, "Inbox (157) - araj24..."],
  [155, <Slack />, "Slack | group7-mob..."],
  [154, <svg width="16" height="12" viewBox="0 0 16 12"><path d="M4 11V1c5 0 5 4 1 4.500 6 0 6 5.500-1 5.500" stroke="#1d1d1d" fill="none" strokeWidth="1.500" /><path d="M12 4c4 1 3 5 0 7 1-2 1-4 0-7z" fill="#e2592c" /></svg>, "https://www.bolly2t..."],
  [154, <svg width="16" height="14" viewBox="0 0 16 14" fill="none" stroke="#e8505b" strokeWidth="2.300"><path d="M1 5l4-3.500L3.500 9c-.5 3.500 3.500 3.500 5 .5L11 1 9.500 9.500c-.3 3 2.500 3 5 .5" /></svg>, "Online Courses - A..."],
  [73, <svg width="16" height="16" viewBox="0 0 16 16"><rect width="16" height="16" fill="#f09a1b" /><path d="M3 13l1-4 7-7 3 3-7 7z" fill="#fbe7b0" /><path d="M5 9.500l6-6 2 2-6 6z" fill="#4ab9c4" /></svg>, "Home"],
  [154, <LetterTile $bg="#4a85b5" $fg="#fff">ρ</LetterTile>, "ECE/CS 559 | Class..."],
  [154, <svg width="16" height="12" viewBox="0 0 16 12" fill="#17a2a2"><path d="M2 9h2v3H2zM5 6h2v6H5zM8.500 3h2v9h-2zM12 0h2v12h-2z" /></svg>, "Dashboard | Grades..."],
  [154, <TinyMark $c="#9b1c24">wco</TinyMark>, "Port Academic Cent..."],
  [154, <LetterTile $bg="#000" $fg="#fff" $round>R</LetterTile>, "The Ringer Podcast..."],
  [241, <svg width="16" height="16" viewBox="0 0 16 16"><rect width="16" height="16" rx="2" fill="#fff" /><g transform="translate(2,1)"><FaAmazon size={12} color="#222" /></g><path d="M2 11.500c4 3 8 3 12 0" stroke="#f39a1c" strokeWidth="1.500" fill="none" /></svg>, "Amazon.com: Onlin..."],
];

const apps: { run?: boolean; on?: boolean; i: React.ReactNode }[] = [
  { i: <svg width="18" height="18" viewBox="0 0 18 18"><circle cx="9" cy="9" r="7" fill="none" stroke="#fff" strokeWidth="2" /></svg> },
  { i: <svg width="18" height="16" viewBox="0 0 18 16" fill="none" stroke="#fff" strokeWidth="1.200"><path d="M1 0v2.500h11V0M1 16v-2.500h11V16M1 5h11v6H1zM16 0v16" /><rect x="14.800" y="5" width="2.500" height="3" fill="#fff" stroke="none" /></svg> },
  { i: <svg width="24" height="24" viewBox="0 0 24 24"><defs><linearGradient id="eg" x1="0" y1="0" x2="1" y2=".4"><stop offset="0" stopColor="#1a9be8" /><stop offset="1" stopColor="#55d466" /></linearGradient></defs><path d="M0 12C0 4 6 0 12 0c7 0 12 4.500 12 10 0 4-3 6-6 6-2.500 0-4-1-3-2.500C17 9 12 7 8 8c-4 1-7 3-8 4z" fill="url(#eg)" /><path d="M0 11c2-4 8-5 11-3-4 2-4 8 0 11 3 2 7 2 10 0-2 4-6 5-9 5C5 24 0 19 0 11z" fill="#1272c8" /></svg> },
  { run: true, i: <svg width="22" height="18" viewBox="0 0 22 18"><path d="M0 0h8l2 2h12v15H0z" fill="#f7c84b" /><path d="M0 0h8l1 3H0z" fill="#e0a021" /><path d="M4 18v-6c0-1 1-2 2-2h10c1 0 2 1 2 2v6h-4v-4H8v4z" fill="#3d96d6" /></svg> },
  { run: true, on: true, i: <svg width="23" height="23" viewBox="0 0 24 24"><circle cx="12" cy="12" r="12" fill="#fbc116" /><path d="M12 12L1.600 6A12 12 0 0 1 22.400 6z" fill="#e33b2e" /><path d="M12 12L1.600 6A12 12 0 0 0 12 24l5-9z" fill="#2ba24c" /><circle cx="12" cy="12" r="5.600" fill="#fff" /><circle cx="12" cy="12" r="4.400" fill="#3f7de8" /></svg> },
  { i: <svg width="24" height="22" viewBox="0 0 24 22"><path d="M0 8l12-8 12 8v14H0z" fill="#0f5fb0" /><path d="M2 7h20l-10 8z" fill="#f2f4f7" /><path d="M0 8l12 8L24 8v14H0z" fill="#2aa5ec" /><path d="M0 22L24 8v14z" fill="#53cdf8" /></svg> },
  { i: <svg width="24" height="24" viewBox="0 0 24 24"><path d="M1 6h22v17H1z" fill="#fff" /><path d="M8 6c0-6 8-6 8 0" fill="none" stroke="#fff" strokeWidth="1.600" /><path d="M6 9h5.500v5H6z" fill="#f25022" /><path d="M12.500 9H18v5h-5.500z" fill="#7fba00" /><path d="M6 15h5.500v5H6z" fill="#00a4ef" /><path d="M12.500 15H18v5h-5.500z" fill="#ffb900" /></svg> },
  { i: <SwTile>SW<SwYear>2019</SwYear></SwTile> },
  { i: <svg width="18" height="24" viewBox="0 0 18 24"><rect width="18" height="24" fill="#fff" /><rect x="2" y="2" width="14" height="4" fill="#1b232d" /><path d="M2.500 9.500h14M2.500 14.500h14M2.500 19.500h14" stroke="#1b232d" strokeWidth="2.200" strokeDasharray="2.500 1.200" /></svg> },
  { i: <svg width="23" height="23" viewBox="0 0 24 24"><circle cx="12" cy="12" r="12" fill="#2374d6" /><path d="M18 5A9 9 0 1 0 21 13M16.500 8.500a5.500 5.500 0 1 0 1.500 4.500" stroke="#fff" strokeWidth="2" fill="none" /><path d="M14 10.500a2.500 2.500 0 1 0 .5 2.500" stroke="#fff" strokeWidth="1.500" fill="none" /></svg> },
  { i: <svg width="18" height="22" viewBox="0 0 18 22"><path d="M0 5l11-5v4L5 6v10L0 18z" fill="#c9395f" /><path d="M11 0l7 2v18l-7 2-8-3 8 1z" fill="#e8530e" /></svg> },
  { run: true, i: <svg width="24" height="22" viewBox="0 0 24 22"><path d="M6 0h18v6H6z" fill="#41a5ee" /><path d="M6 6h18v5H6z" fill="#2b7cd3" /><path d="M6 11h18v5H6z" fill="#185abd" /><path d="M6 16h18v6H6z" fill="#103f91" /><rect y="5" width="12" height="12" fill="#185abd" /><path d="M2.500 8l2 6L6 9l1.500 5 2-6" stroke="#fff" strokeWidth="1.300" fill="none" /></svg> },
  { run: true, i: <svg width="21" height="21" viewBox="0 0 21 21"><defs><linearGradient id="pg" x1="0" y1="0" x2="0" y2="1"><stop offset="0" stopColor="#ef0f0f" /><stop offset="1" stopColor="#850808" /></linearGradient></defs><rect width="21" height="21" fill="url(#pg)" /><path d="M5 16c4-3 6-8 5-11 0-2 1-1 .6 1-.4 4 3 7 6 7 1-.8-6-.8-11 3z" fill="none" stroke="#fff" strokeWidth="1.200" /></svg> },
];

const Terminal = () => (
  <svg width="18" height="18" viewBox="0 0 18 18"><rect width="18" height="17" rx="1" fill="#8d8581" /><rect x="2" y="2" width="14" height="12" fill="#a81212" /><path d="M2 8h14M6 2v12M11 2v12" stroke="#5e0808" strokeWidth="1.300" /></svg>
);
const FolderBlue = ({ w }: { w: number }) => (
  <svg width={w} height="20" viewBox="0 0 20 20"><path d="M2 1h12l3 3v15H2z" fill="#eef2f5" /><path d="M0 5h18v14H2z" fill="#5e9bd0" /><path d="M1 5h17v6H1z" fill="#86b9e2" /></svg>
);

export default function App() {
  return (
    <>
      <Global />
      <Screen>
        <TabStrip>
          {tabs.map((t, i) => (
            <Tab key={i} $w={i < 5 ? 154 : 153} $active={t.active} $sep={!t.nosep}>
              {t.icon}
              <TabTitle $fade={t.fade}>{t.t}</TabTitle>
              <TabClose><X /></TabClose>
            </Tab>
          ))}
          <NewTab><svg width="12" height="12" viewBox="0 0 12 12"><path d="M6 0v12M0 6h12" stroke="#fff" strokeWidth="2" /></svg></NewTab>
          <WinButtons>
            <svg width="10" height="10"><rect y="5" width="10" height="1" fill="#fff" /></svg>
            <svg width="10" height="10" viewBox="0 0 10 10" fill="none" stroke="#fff"><path d="M.5 2.500h7v7h-7zM2.500 2.500v-2h7v7h-2" /></svg>
            <svg width="10" height="10" viewBox="0 0 10 10" stroke="#fff"><path d="M0 0l10 10M10 0L0 10" /></svg>
          </WinButtons>
        </TabStrip>
        <AddressRow>
          <Slot $w={32}><svg width="14" height="14" viewBox="0 0 14 14" fill="none" stroke="#8a8a8a" strokeWidth="1.700"><path d="M14 7H1.500M7 1L1.200 7 7 13" /></svg></Slot>
          <Slot $w={32}><svg width="14" height="14" viewBox="0 0 14 14" fill="none" stroke="#8a8a8a" strokeWidth="1.700"><path d="M0 7h12.500M7 1l5.800 6L7 13" /></svg></Slot>
          <Slot $w={32}><svg width="15" height="15" viewBox="0 0 15 15"><path d="M12.500 4.500A6 6 0 1 0 13.300 9" fill="none" stroke="#fff" strokeWidth="2" /><path d="M14 0v6.200H7.800z" fill="#fff" /></svg></Slot>
          <Slot $w={32}><svg width="16" height="15" viewBox="0 0 16 15"><path d="M8 1.400L14 7.500h-2V14H4V7.500H2z" fill="none" stroke="#fff" strokeWidth="1.900" /></svg></Slot>
          <Omnibox>
            <svg width="11" height="13" viewBox="0 0 11 13"><rect x="1" y="4.500" width="9" height="8" rx="1" fill="#5f6368" /><path d="M3 5V3a2.500 2.500 0 0 1 5 0v2" fill="none" stroke="#5f6368" strokeWidth="1.400" /></svg>
            <Url>r714251c781600xreact2mh2glsk-3000.udacity-student-workspaces.com<UrlPath>/vnc.html?resize=remote&amp;reconnect=1&amp;autoconnect=1</UrlPath></Url>
            <svg width="15" height="15" viewBox="0 0 16 16"><path d="M8 1.200l2 4.700 5 .4-3.800 3.300 1.200 5L8 12l-4.400 2.600 1.200-5L1 6.300l5-.4z" fill="none" stroke="#5f6368" strokeWidth="1.400" /></svg>
          </Omnibox>
          <Extensions>{barIcons.map(([w, ic], i) => <Slot key={i} $w={w}>{ic}</Slot>)}</Extensions>
        </AddressRow>
        <BookmarkBar>
          {marks.map(([w, ic, t], i) => <Bookmark key={i} $w={w}>{ic}{t && <span>{t}</span>}</Bookmark>)}
          <Bookmark $w={18}><svg width="9" height="8" viewBox="0 0 9 8" fill="none" stroke="#fff" strokeWidth="1.500"><path d="M.7.5L4 4 .7 7.500M4.700.5L8 4 4.700 7.500" /></svg></Bookmark>
          <BarDivider />
          <Bookmark $w={120} $ls={-0.15}><svg width="14" height="14" viewBox="0 0 14 14"><path d="M1 0h11v9l1.500 5H1z" fill="#fbe08e" /><path d="M12 9v5h-2z" fill="#e0b34a" /></svg><span>Other bookmarks</span></Bookmark>
        </BookmarkBar>

        <WindowTitle>
          <WindowMark>RViz</WindowMark>
          <TitleText>RViz*</TitleText>
          <WindowControls>
            <svg width="9" height="10"><rect y="4" width="9" height="2" fill="#777" /></svg>
            <svg width="11" height="11" viewBox="0 0 11 11" stroke="#777" strokeWidth="2"><path d="M5.500 0v11M0 5.500h11" /></svg>
            <X c="#777" s={9} />
          </WindowControls>
        </WindowTitle>
        <MenuBar><span><u>F</u>ile</span><span><u>P</u>anels</span><span><u>H</u>elp</span></MenuBar>
        <ToolBar>
          <Handle />
          <Tool $w={86} $pressed>
            <svg width="16" height="17" viewBox="0 0 16 17"><path d="M4.500 10V2c0-1.500 2-1.500 2 0v5c0-1.300 2.500-1.300 2.500 0 0-1 2.500-1 2.500.5 0-1 2.500-.8 2.500.8V12l-1 4H5.500L1 10.500c-.8-1.500 1-2 2-1z" fill="#fff" stroke="#333" /></svg>
            <ToolText>Interact</ToolText>
          </Tool>
          {tools.map(([t, w, ic]) => <Tool key={t} $w={w}>{ic}<ToolText>{t}</ToolText></Tool>)}
          <ToolDivider />
          <Tool $w={33}><svg width="12" height="12" viewBox="0 0 12 12"><path d="M4.300.6h3.400v3.700h3.700v3.400H7.700v3.700H4.300V7.700H.6V4.300h3.700z" fill="#a9cbf0" stroke="#2e62a8" strokeWidth="1.200" /></svg></Tool>
          <Tool $w={32}><svg width="20" height="24" viewBox="0 0 20 24"><rect x=".6" y="10" width="11" height="3.600" fill="#a9cbf0" stroke="#2e62a8" strokeWidth="1.200" /><path d="M13.500 20.500h6.500l-3.200 3.200z" fill="#333" /></svg></Tool>
          <Tool $w={30}><svg width="22" height="24" viewBox="0 0 22 24"><path d="M0 12c3-6 11-6 14 0-3 5-11 5-14 0z" fill="#e9e9f2" stroke="#999" strokeWidth=".8" /><circle cx="7" cy="11.500" r="3.500" fill="#5068ac" /><circle cx="7" cy="11.500" r="1.600" fill="#111" /><path d="M15 20.500h6.500l-3.200 3.200z" fill="#333" /></svg></Tool>
        </ToolBar>

        <Body>
          <LeftDock>
            <DockHeader>
              <svg width="16" height="16" viewBox="0 0 16 16"><rect x=".7" y=".7" width="14.600" height="11.600" fill="#d99" stroke="#111" strokeWidth="1.400" /><rect x="5.500" y="1.400" width="5" height="10.200" fill="#9d9" /><rect x="10" y="1.400" width="4.600" height="10.200" fill="#aae" /><path d="M6 13h4l2 2.500H4z" fill="#111" /></svg>
              <span>Displays</span><DockClose />
            </DockHeader>
            <Tree $h={600} $split={170}>{items.map((it, i) => <DisplayRow key={i} it={it} />)}</Tree>
            <HDots />
            <HelpBox />
            <Buttons><Button>Add</Button><Button $disabled>Duplicate</Button><Button $disabled>Remove</Button><Button $disabled>Rename</Button></Buttons>
          </LeftDock>
          <Splitter><SplitDots /><Right flip /></Splitter>
          <Scene />
          <Splitter $right><Right /><SplitDots /></Splitter>
          <RightDock>
            <DockHeader>
              <svg width="16" height="9" viewBox="0 0 16 9"><path d="M0 0l5 4V2l2-2h7l2 2v5l-2 2H7L5 7V5L0 9z" fill="#444" /></svg>
              <span>Views</span><DockClose />
            </DockHeader>
            <TypeRow>Type:<Combo>Orbit (rviz)<Down /></Combo><Button>Zero</Button></TypeRow>
            <Tree $h={648} $split={134}>
              <Row $h={14} $split={134}>
                <NameCell $pad={4} $sel><Twisty><Down /></Twisty><NameText $ml={9}>Current View</NameText></NameCell>
                <ValueCell $sel>Orbit (rviz)</ValueCell>
              </Row>
              {views.map((it, i) => (
                <Row key={i} $h={14} $split={134}>
                  <NameCell $pad={24}><Twisty>{it.open === false && <Right />}</Twisty><NameText $ml={9}>{it.n}</NameText></NameCell>
                  <ValueCell>{it.c !== undefined && <Check>{it.c && <Tick c="#111" />}</Check>}{it.v}</ValueCell>
                </Row>
              ))}
            </Tree>
            <Buttons><Button>Save</Button><Button>Remove</Button><Button>Rename</Button></Buttons>
          </RightDock>
        </Body>

        <DockHeader>
          <svg width="16" height="16" viewBox="0 0 16 16"><circle cx="8" cy="8" r="7" fill="#fff" stroke="#555" strokeWidth="1.600" /><path d="M8 3.500V8h3.500" fill="none" stroke="#222" strokeWidth="1.200" /></svg>
          <span>Time</span><DockClose />
        </DockHeader>
        <TimeRow>
          ROS Time:<Field>578.53</Field>ROS Elapsed:<Field>28.74</Field>Wall Time:<Field>1586448925.47</Field>Wall Elapsed:<Field>32.12</Field>
          <Experimental><Check />Experimental</Experimental>
        </TimeRow>
        <StatusRow>
          <Button $w={51}>Reset</Button>
          <Hint><b>Left-Click:</b> Rotate. <b>Middle-Click:</b> Move X/Y. <b>Right-Click/Mouse Wheel:</b>: Zoom. <b>Shift</b>: More options.</Hint>
          <Fps>31 fps</Fps>
        </StatusRow>

        <Panel>
          <LxLogo><svg width="24" height="24" viewBox="0 0 24 24"><path d="M2 22C0 12 4 3 12 2c6-.5 10 6 10 14C18 9 13 8 11 12c4 1 6 5 6 10-3-5-7-7-9-3l-1 4z" fill="#dbe8f4" /><path d="M4 12l9-6M8 15l8-7" stroke="#3d78b0" strokeWidth="1.300" /></svg></LxLogo>
          <Launch><svg width="22" height="21" viewBox="0 0 22 21"><path d="M2 1h14l4 3v15H2z" fill="#eef2f5" /><path d="M1 5h20v15H3z" fill="#5e9bd0" /><path d="M13 8l7 7-3 .3 2 4-1.500.7-2-4-2.500 2z" fill="#fff" stroke="#333" strokeWidth=".6" /></svg></Launch>
          <Launch><svg width="22" height="21" viewBox="0 0 22 21"><rect width="22" height="21" rx="2" fill="#1d4a66" /><path d="M2 4l6-2 3 3-4 5-4-1zM12 3l8 1-1 6-5-1zM8 12l6 1-2 6-4-2z" fill="#b9dcec" /></svg></Launch>
          <Launch><svg width="22" height="21" viewBox="0 0 22 21"><rect x=".5" y=".5" width="21" height="20" rx="1" fill="#d9dbdd" stroke="#666" /><rect x="1" y="1" width="20" height="4" fill="#3f6f9f" /></svg></Launch>
          <Desk $on>RViz</Desk><Desk />
          <Task $w={151} $ls={0.65}><Terminal />/home/worksp...</Task>
          <Task $w={151} $ls={0.65}><Terminal />/home/worksp...</Task>
          <Task $w={150}><FolderBlue w={18} />launch</Task>
          <Task $w={159}><svg width="20" height="20" viewBox="0 0 20 20"><path d="M10 .5l9 4.500v10l-9 4.500L1 15V5z" fill="#eee" stroke="#222" strokeWidth="1.200" /><path d="M10 1l8 4-8 4-8-4z" fill="#f58113" stroke="#222" /><path d="M1 10l9 4 9-4M10 9v10" stroke="#222" strokeWidth="1.200" fill="none" /></svg>Gazebo</Task>
          <Task $w={146} $active $ls={-0.4}><TaskMark>RViz</TaskMark>RViz*</Task>
          <PanelRight>
            <svg width="22" height="14" viewBox="0 0 22 14"><path d="M0 4h3l4-4v14l-4-4H0z" fill="#999" /><path d="M9 7h12" stroke="#999" strokeWidth="2" strokeDasharray="2 3" /></svg>
            <PanelClock>16:15</PanelClock>
            <svg width="16" height="17" viewBox="0 0 16 17" fill="none" stroke="#555" strokeWidth="2"><path d="M4 3.500a6.800 6.800 0 1 0 8 0M8 0v8" /></svg>
          </PanelRight>
        </Panel>

        <Taskbar>
          <Slot $w={48.5}><svg width="16" height="16" viewBox="0 0 16 16" fill="#fff"><path d="M0 2.300l6.700-1v6.300H0zM7.500 1.200L16 0v7.600H7.500zM0 8.400h6.700v6.300L0 13.700zM7.500 8.400H16V16l-8.500-1.200z" /></svg></Slot>
          <SearchBox><svg width="17" height="17" viewBox="0 0 17 17" fill="none" stroke="#222" strokeWidth="1.300"><circle cx="10.500" cy="6.500" r="5.500" /><path d="M6.500 10.500L.5 16.500" /></svg><span>Type here to search</span></SearchBox>
          {apps.map((a, i) => <AppSlot key={i} $run={a.run} $on={a.on}>{a.i}</AppSlot>)}
          <Tray>
            <Slot $w={33}><svg width="24" height="22" viewBox="0 0 24 22"><circle cx="11" cy="11" r="10.300" fill="#1593d8" stroke="#fff" strokeWidth="1.400" /><path d="M7.500 8c0-5 7.500-4.500 7 0-.3 2.500-3.500 2.500-3.500 5.500M11 15v2.500" stroke="#fff" strokeWidth="2.200" fill="none" /><circle cx="18.500" cy="16" r="5" fill="#f5a623" /><path d="M18.500 13v1M18.500 15v4" stroke="#fff" strokeWidth="1.300" /></svg></Slot>
            <Slot $w={33}><svg width="12" height="7" viewBox="0 0 12 7"><path d="M.5 6.500L6 1l5.500 5.500" stroke="#fff" strokeWidth="1.200" fill="none" /></svg></Slot>
            <Slot $w={32}><svg width="17" height="13" viewBox="0 0 17 13" fill="none" stroke="#fff"><path d="M.5 4.500h2.500l3-3.500v11L3 8.500H.5zM8 4.500c1 1 1 3 0 4" /><path d="M10 3c2 2 2 5 0 7" /><path d="M12.500 1c3 3 3 8 0 11" stroke="#777" /></svg></Slot>
            <Slot $w={32}><svg width="16" height="12" viewBox="0 0 16 12" fill="none" stroke="#fff"><path d="M5 2.500h9.500v8H4V7M1 0v2M4 0v2M.5 2.500h4v2l-2 1.500-2-1.500zM2.500 6v4" /><rect x="7" y="5" width="5" height="3.500" fill="#fff" stroke="none" /></svg></Slot>
            <Slot $w={32}><svg width="14" height="14" viewBox="0 0 14 14" fill="none" stroke="#fff"><path d="M1 13C1 6 6 1.500 13 1.500M4.500 13c0-5 3.500-8 8.500-8M7.500 13c0-3 2-5 5.500-5" /><circle cx="11.500" cy="11.800" r="1.400" fill="#fff" stroke="none" /></svg></Slot>
            <Slot $w={32}><FaDropbox size={16} color="#fff" /></Slot>
            <Slot $w={38}><svg width="17" height="16" viewBox="0 0 17 16" fill="none" stroke="#fff" strokeWidth="1.100"><path d="M5 12L13 1.500c1-1.200 3 .5 2 1.700L7 13l-2.500.7zM5 9c-3-1-5 2-4 4 1 2 4 2 6 0s3-4 5-4 4 0 4-2" /></svg></Slot>
            <Clock>11:15 AM<br />4/9/2020</Clock>
            <Slot $w={40}><svg width="16" height="16" viewBox="0 0 16 16"><path d="M0 0h16v12H7l-4 3.500V12H0z" fill="#fff" /><path d="M2.500 3h11M2.500 6h11M2.500 9h7" stroke="#1b232d" strokeWidth="1.200" /></svg><Count>18</Count></Slot>
            <ShowDesktop />
          </Tray>
        </Taskbar>

        <VncHandle><svg width="5" height="7" viewBox="0 0 5 7"><path d="M0 0l5 3.500L0 7z" fill="#fff" /></svg></VncHandle>
        <Pointer>
          <svg width="32" height="34" viewBox="0 0 32 34"><path d="M1.500 1.500v15.500l3.700-3.400 2.800 5.600 2.600-1.200-2.700-5.500 4.700-.5z" fill="#fff" stroke="#000" strokeWidth=".8" /><path d="M20.500 18.500v13M18 21l2.500-3 2.500 3M18 29l2.500 3 2.500-3M14.500 22.500c0 3 2 4.200 6 4.200s6-1.200 6-4.200M13 24l1.500-2 1.500 2M25 24l1.500-2 1.500 2" fill="none" stroke="#fff" strokeWidth="1.200" /></svg>
        </Pointer>
      </Screen>
    </>
  );
}
